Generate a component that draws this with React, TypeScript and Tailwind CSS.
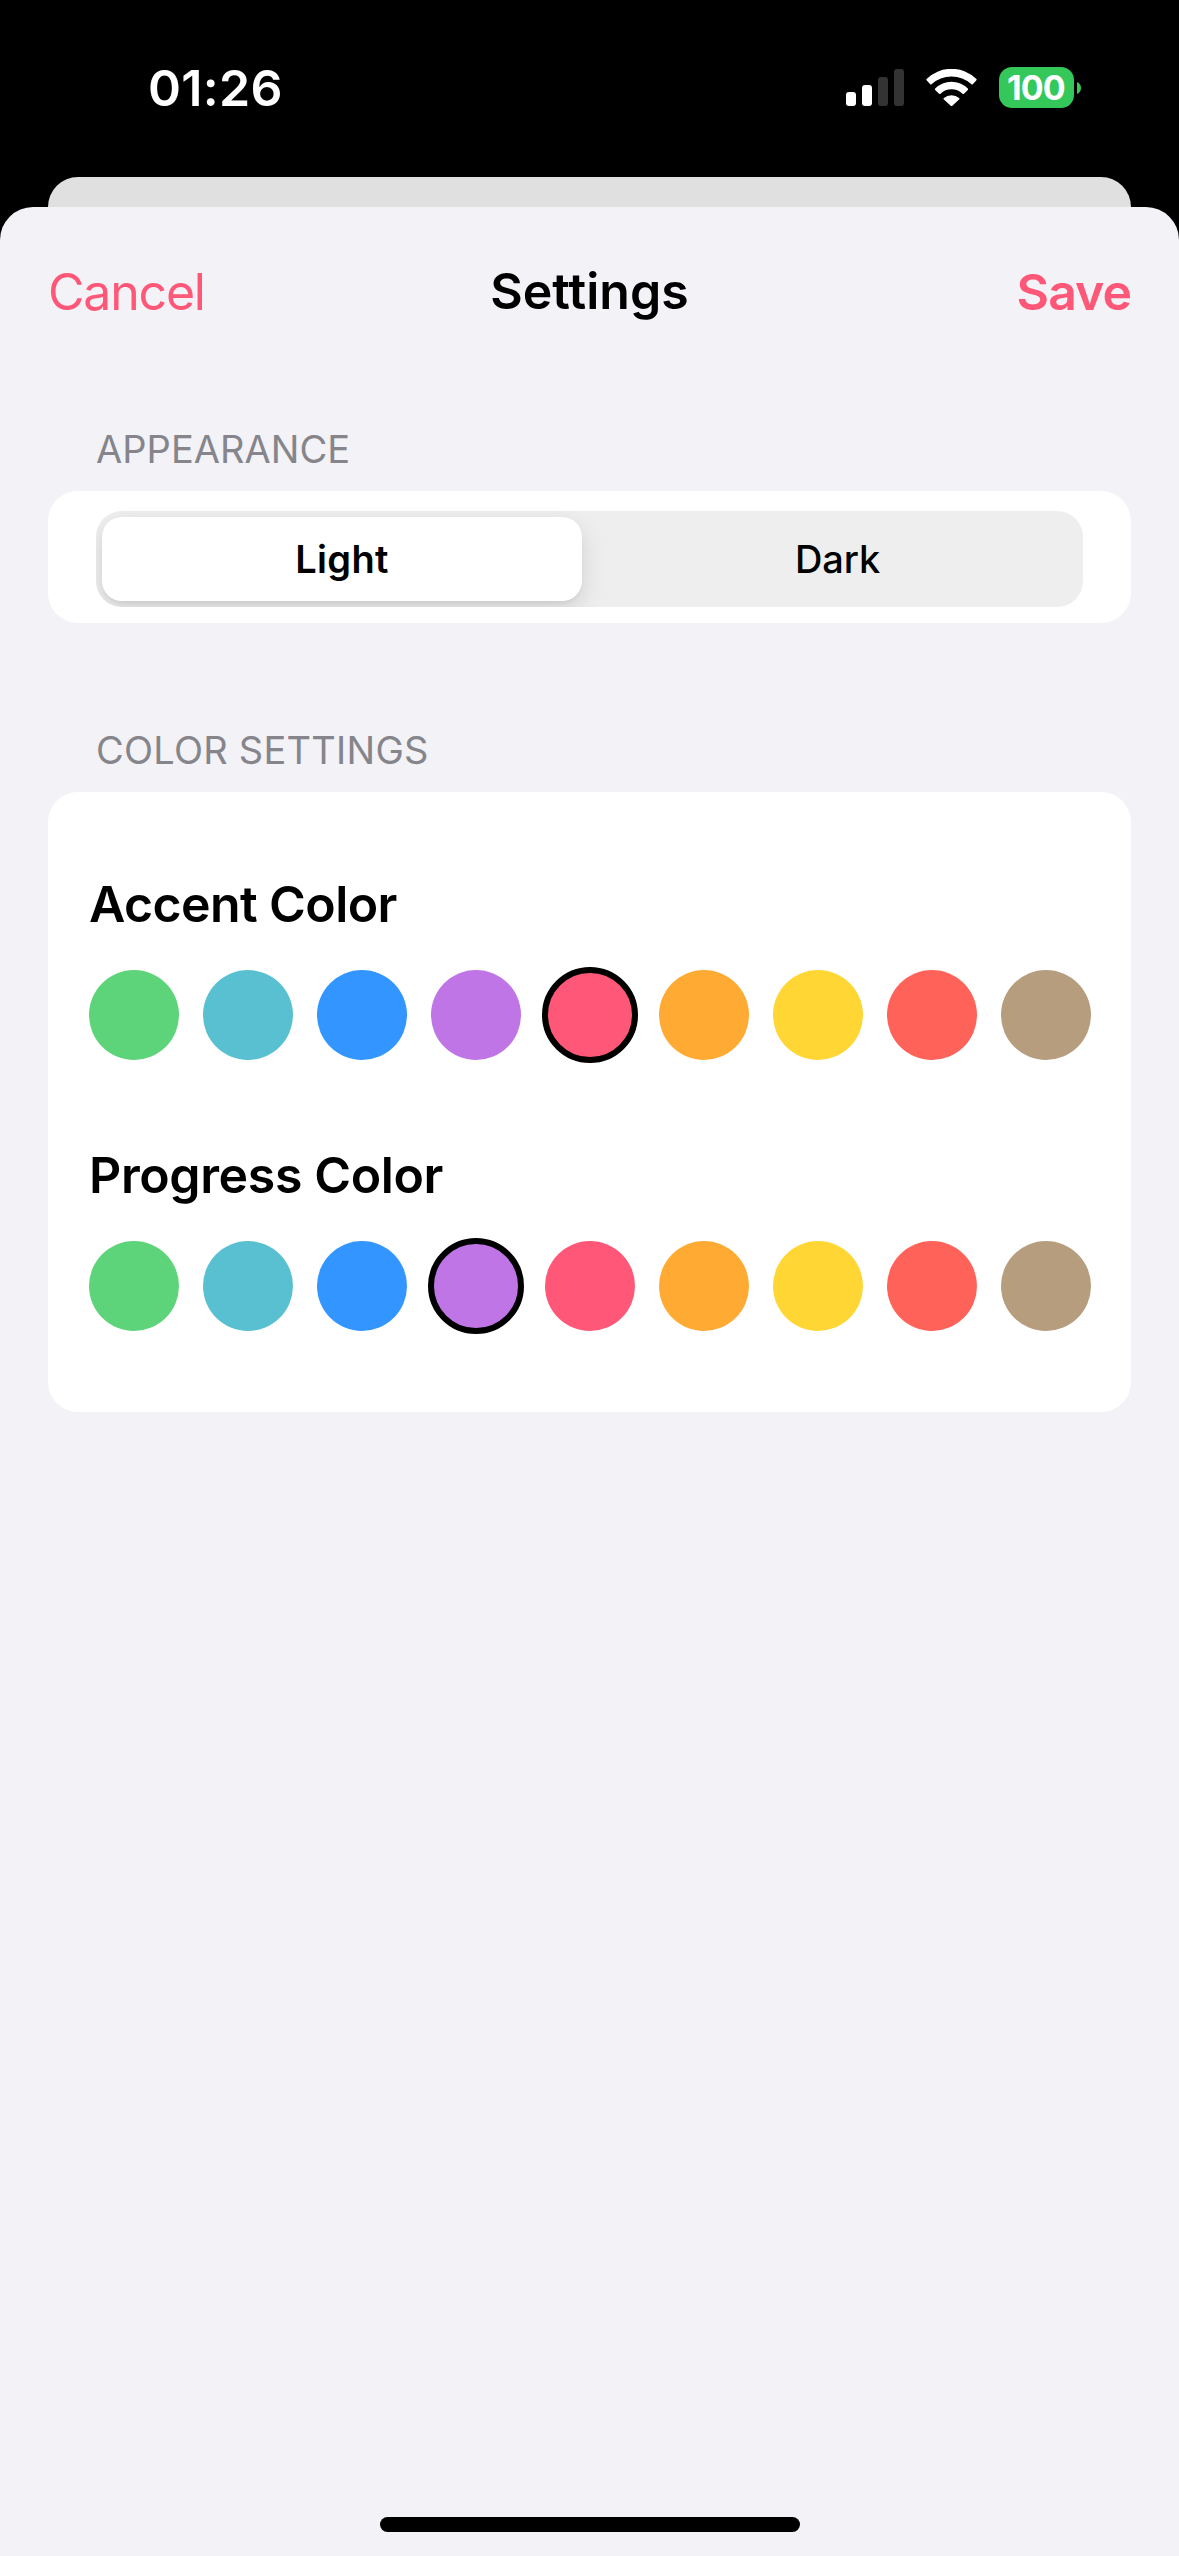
import { useState } from "react";

const swatches = [
  { name: "Green", fill: "bg-[#5dd37a]" },
  { name: "Teal", fill: "bg-[#59c0d2]" },
  { name: "Blue", fill: "bg-[#3395ff]" },
  { name: "Purple", fill: "bg-[#bf75e5]" },
  { name: "Pink", fill: "bg-[#ff5777]" },
  { name: "Orange", fill: "bg-[#ffaa33]" },
  { name: "Yellow", fill: "bg-[#ffd633]" },
  { name: "Red", fill: "bg-[#ff6259]" },
  { name: "Brown", fill: "bg-[#b59d7e]" },
];

function SignalIcon() {
  return (
    <svg width="58" height="37" viewBox="0 0 58 37" aria-hidden="true">
      <rect x="0" y="23" width="10" height="14" rx="3" fill="#fff" />
      <rect x="16" y="16" width="10" height="21" rx="3" fill="#fff" />
      <rect x="32" y="8" width="10" height="29" rx="3" fill="#333" />
      <rect x="48" y="0" width="10" height="37" rx="3" fill="#333" />
    </svg>
  );
}

function WifiIcon() {
  return (
    <svg width="51" height="37" viewBox="0 0 51 37" fill="#fff" aria-hidden="true">
      <path d="M0.6 10 A35.5 35.5 0 0 1 50.4 10 Q51 10.6 50.4 11.2 L46.8 15.2 Q46.2 15.8 45.5 15.2 A30 30 0 0 0 5.5 15.2 Q4.8 15.8 4.2 15.2 L0.6 11.2 Q0 10.6 0.6 10 Z" />
      <path d="M9.2 19.6 A23 23 0 0 1 41.8 19.6 Q42.5 20.3 41.8 21 L38 24.7 Q37.3 25.4 36.5 24.7 A16 16 0 0 0 14.5 24.7 Q13.7 25.4 13 24.7 L9.2 21 Q8.5 20.3 9.2 19.6 Z" />
      <path d="M17.9 28.9 A11.8 11.8 0 0 1 33.1 28.9 Q33.9 29.6 33.1 30.4 L26.3 36.7 Q25.5 37.4 24.7 36.7 L17.9 30.4 Q17.1 29.6 17.9 28.9 Z" />
    </svg>
  );
}

function StatusBar() {
  return (
    <header className="flex h-[177px] shrink-0 items-start justify-between pt-[58px] pr-[98px] pl-[148px] text-white">
      <span className="text-[50px] leading-[60px] font-semibold tracking-[0.32px]">01:26</span>
      <div className="flex h-[59px] items-center">
        <SignalIcon />
        <div className="ml-[22px]">
          <WifiIcon />
        </div>
        <div className="ml-[22px] flex items-center gap-[3px]">
          <div className="flex h-[41px] w-[75px] items-center rounded-[13px] bg-[#34c759] pl-2 text-[34px] leading-[41px] font-bold tracking-[-0.9px]">
            100
          </div>
          <svg width="4" height="12" viewBox="0 0 4 12" aria-hidden="true">
            <path d="M0 0 Q4 1.8 4 6 Q4 10.2 0 12 Z" fill="#34c759" />
          </svg>
        </div>
      </div>
    </header>
  );
}

function SectionTitle({ children, className }: { children: string; className: string }) {
  return (
    <h2 className={`mb-[18px] pl-12 text-[38px] leading-[48px] text-[#85858b] ${className}`}>{children}</h2>
  );
}

function SwatchRow({ selected, onSelect }: { selected: number; onSelect: (i: number) => void }) {
  return (
    <div className="mt-[33px] flex gap-[18px]">
      {swatches.map((s, i) =>
        i === selected ? (
          <button
            key={s.name}
            aria-label={s.name}
            onClick={() => onSelect(i)}
            className={`size-24 rounded-full border-6 border-black ${s.fill}`}
          />
        ) : (
          <button
            key={s.name}
            aria-label={s.name}
            onClick={() => onSelect(i)}
            className={`m-[3px] size-[90px] rounded-full ${s.fill}`}
          />
        ),
      )}
    </div>
  );
}

export default function App() {
  const [accent, setAccent] = useState(4);
  const [progress, setProgress] = useState(3);

  return (
    <div className="flex h-[2556px] w-[1179px] flex-col overflow-hidden bg-black font-['Inter',sans-serif] text-black">
      <StatusBar />
      <div className="mx-[48px] h-[30px] shrink-0 rounded-t-[30px] bg-[#e0e0e0]" />
      <main className="flex flex-1 flex-col rounded-t-[33px] bg-[#f2f2f7] px-12">
        <nav className="grid h-[170px] shrink-0 grid-cols-3 items-center text-[50px] leading-[60px]">
          <button className="text-left tracking-[-1.2px] text-[#ff5777]">Cancel</button>
          <h1 className="pb-0.5 text-center font-semibold tracking-[0.05px]">Settings</h1>
          <button className="text-right font-semibold tracking-[-1px] text-[#ff5777]">Save</button>
        </nav>

        <SectionTitle className="mt-12 tracking-[0.05px]">APPEARANCE</SectionTitle>
        <section className="h-[132px] rounded-[30px] bg-white px-12 pt-5">
          <div className="flex h-24 overflow-hidden rounded-[26px] bg-[#eeeeee] p-1.5 text-[38px]">
            <button className="w-[480px] rounded-[20px] bg-white font-semibold tracking-[0.3px] shadow-[0_9px_24px_rgba(0,0,0,0.12),0_3px_3px_rgba(0,0,0,0.04)]">
              Light
            </button>
            <button className="flex-1 pl-4 font-medium tracking-[-0.1px]">Dark</button>
          </div>
        </section>

        <SectionTitle className="mt-[103px] tracking-[0.24px]">COLOR SETTINGS</SectionTitle>
        <section className="h-[620px] rounded-[30px] bg-white pt-[82px] pl-[38px]">
          <h3 className="pl-[3px] text-[50px] leading-[60px] font-semibold tracking-[-0.6px]">Accent Color</h3>
          <SwatchRow selected={accent} onSelect={setAccent} />
          <h3 className="mt-[82px] pl-[3px] text-[50px] leading-[60px] font-semibold tracking-[-0.37px]">
            Progress Color
          </h3>
          <SwatchRow selected={progress} onSelect={setProgress} />
        </section>

        <div className="mt-auto mb-6 h-[15px] w-[420px] self-center rounded-full bg-black" />
      </main>
    </div>
  );
}
